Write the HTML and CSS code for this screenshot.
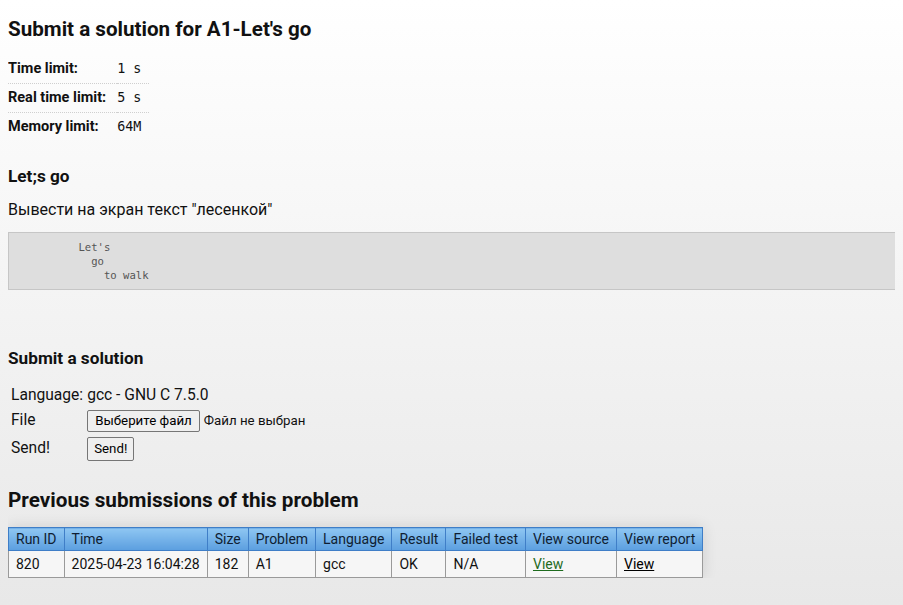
FILE: index.html
```html
<!DOCTYPE html>
<html>
<head>
<meta charset="utf-8">
<link rel="stylesheet" href="styles.css">
</head>
<body>
<h2 class="title">Submit a solution for A1-Let's go</h2>
<table class="limits">
  <tr><th>Time limit:</th><td>1 s</td></tr>
  <tr><th>Real time limit:</th><td>5 s</td></tr>
  <tr class="last"><th>Memory limit:</th><td>64M</td></tr>
</table>
<h3 class="prob-name">Let;s go</h3>
<p class="statement">Вывести на экран текст "лесенкой"</p>
<pre class="sample">         Let's
           go
             to walk</pre>
<h3 class="submit-title">Submit a solution</h3>
<table class="form">
  <tr class="r1"><td class="flabel">Language:</td><td>gcc - GNU C 7.5.0</td></tr>
  <tr class="r2"><td class="flabel">File</td><td><span class="btn">Выберите файл</span><span class="nofile">Файл не выбран</span></td></tr>
  <tr class="r3"><td class="flabel">Send!</td><td><span class="btn send">Send!</span></td></tr>
</table>
<h2 class="prev-title">Previous submissions of this problem</h2>
<table class="runs">
  <thead>
    <tr><th>Run ID</th><th>Time</th><th>Size</th><th>Problem</th><th>Language</th><th>Result</th><th>Failed test</th><th>View source</th><th>View report</th></tr>
  </thead>
  <tbody>
    <tr><td>820</td><td>2025-04-23 16:04:28</td><td>182</td><td>A1</td><td>gcc</td><td>OK</td><td>N/A</td><td><a class="src" href="#">View</a></td><td><a class="rep" href="#">View</a></td></tr>
  </tbody>
</table>
</body>
</html>
```
FILE: styles.css
```css
html {
  height: 605px;
  overflow: hidden;
  background: linear-gradient(#ffffff, #e8e8e8) no-repeat;
  background-size: 100% 605px;
  background-color: #e8e8e8;
}
body {
  margin: 0 8px;
  font-family: Roboto, "Liberation Sans", sans-serif;
  color: #111;
}
.title {
  font-size: 20.6px;
  font-weight: 700;
  margin: 17px 0 14px;
  line-height: 24px;
}
.limits {
  border-collapse: collapse;
}
.limits th {
  text-align: left;
  font-size: 14.5px;
  font-weight: 700;
  padding: 5px 11px 5px 0;
  line-height: 18px;
  border-bottom: 1px dotted #cfcfcf;
  white-space: nowrap;
}
.limits td {
  font-family: "DejaVu Sans Mono", monospace;
  font-size: 13.4px;
  padding: 5px 8px 5px 0;
  line-height: 18px;
  border-bottom: 1px dotted #cfcfcf;
}
.limits tr.last th, .limits tr.last td {
  border-bottom: none;
}
.prob-name {
  font-size: 17.2px;
  font-weight: 700;
  margin: 24px 0 13px;
  line-height: 22px;
}
.statement {
  font-size: 16px;
  margin: 0 0 12px;
  line-height: 20px;
}
.sample {
  box-sizing: border-box;
  width: calc(100% + 8px);
  background: #dedede;
  border: 1px solid #c6c6c6;
  border-right: none;
  margin: 0;
  padding: 7px 0 7px 12px;
  font-family: "DejaVu Sans Mono", monospace;
  font-size: 10.6px;
  line-height: 14px;
  color: #555;
}
.submit-title {
  font-size: 17.2px;
  font-weight: 700;
  margin: 57px 0 14px;
  line-height: 22px;
}
.form {
  border-collapse: separate;
  border-spacing: 2px;
  font-size: 15.6px;
}
.form td {
  padding: 0 1px;
  line-height: 21px;
  vertical-align: middle;
}
.form .r2 td { height: 25px; }
.form .r3 td { height: 27px; }
.btn {
  display: inline-block;
  font-size: 13.3px;
  line-height: 16px;
  padding: 2px 7px;
  border: 1px solid #767676;
  border-radius: 2px;
  background: #efefef;
  color: #000;
  vertical-align: middle;
}
.btn.send {
  padding: 3px 6px;
}
.nofile {
  font-size: 13.3px;
  margin-left: 4px;
  vertical-align: middle;
}
.prev-title {
  font-size: 20.7px;
  font-weight: 700;
  margin: 24px 0 15px;
  line-height: 24px;
}
.runs {
  border-collapse: collapse;
  font-size: 14px;
  box-shadow: 0 0 14px rgba(0,0,0,0.12);
}
.runs th {
  font-weight: 400;
  text-align: left;
  color: #0f1e33;
  background: linear-gradient(#8ec6f2, #5b9edf);
  border: 1px solid #3f7ec7;
  padding: 2px 7px;
  line-height: 18px;
  white-space: nowrap;
}
.runs td {
  background: #f6f6f6;
  border: 1px solid #9a9a9a;
  border-top: none;
  padding: 4px 7px 3px;
  line-height: 19px;
  white-space: nowrap;
}
.runs a.src { color: #1e6b1e; }
.runs a.rep { color: #000; }
```
